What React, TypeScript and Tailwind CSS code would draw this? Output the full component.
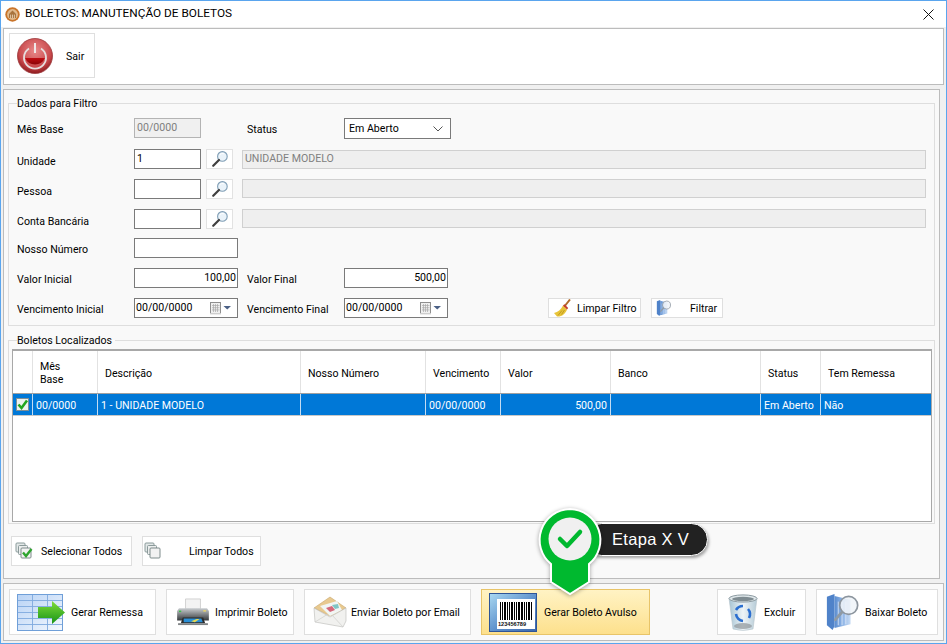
import React from "react";

const Power = () => (
  <svg width="36" height="36" viewBox="0 0 36 36">
    <defs>
      <radialGradient id="pw" cx="50%" cy="35%" r="65%">
        <stop offset="0" stopColor="#e88a8a" />
        <stop offset="0.7" stopColor="#c9494c" />
        <stop offset="1" stopColor="#8e1a1e" />
      </radialGradient>
      <linearGradient id="pw2" x1="0" y1="0" x2="0" y2="1">
        <stop offset="0" stopColor="#c00d12" />
        <stop offset="1" stopColor="#8a0508" />
      </linearGradient>
    </defs>
    <circle cx="18" cy="18" r="17.5" fill="url(#pw)" stroke="#9c3a3c" strokeWidth="0.8" />
    <path d="M8 20 H28 A11 11 0 0 1 8 20Z" fill="url(#pw2)" />
    <path d="M12 10.5 A11 11 0 1 0 24 10.5" fill="none" stroke="#e6dede" strokeWidth="1.8" />
    <rect x="17" y="5" width="2" height="10" fill="#f0e8e8" />
  </svg>
);

const TitleLogo = () => (
  <svg width="15" height="15" viewBox="0 0 15 15">
    <circle cx="7.5" cy="7.5" r="7.2" fill="#c9742a" />
    <circle cx="7.5" cy="7.5" r="5.4" fill="#e0b98c" />
    <path d="M4 11V7L7.5 3.6 11 7V11Z" fill="#a8733d" />
    <path d="M5.6 11V7.6M7.5 11V7.6M9.4 11V7.6" stroke="#eddcc4" strokeWidth="0.8" />
  </svg>
);

const Magnifier = () => (
  <svg width="18" height="18" viewBox="0 0 18 18">
    <circle cx="11.4" cy="6.4" r="4.8" fill="#eaf3fa" stroke="#7f9db5" strokeWidth="1.1" />
    <path d="M8 10 L2.2 15.8" stroke="#3f3f3f" strokeWidth="2.2" strokeLinecap="round" />
    <path d="M9 4.5 A3.5 3.5 0 0 1 13 3.8" stroke="#ffffff" strokeWidth="1" fill="none" />
  </svg>
);

const Calendar = () => (
  <svg width="28" height="14" viewBox="0 0 28 14" className="shrink-0">
    <rect x="1.5" y="1.5" width="10" height="11" fill="#f0f0f0" stroke="#8f8f8f" />
    <path d="M3 4.5H10.5M3 6.7H10.5M3 8.9H10.5M4.5 3V11M6.5 3V11M8.5 3V11" stroke="#a9a9a9" strokeWidth="0.7" />
    <rect x="1" y="12" width="11" height="1.4" fill="#cfcfcf" />
    <path d="M14.5 5H22L18.25 8.5Z" fill="#4c6186" />
  </svg>
);

const Broom = () => (
  <svg width="20" height="18" viewBox="0 0 20 18" className="shrink-0">
    <path d="M11 8 L17 0.5" stroke="#b06a2a" strokeWidth="2" />
    <path d="M1 14 L4 17.5 C8.5 18 12.5 15 14 10.5 L10 6.5 C8 10.5 5 13 1 14Z" fill="#e8c438" />
    <path d="M10 6.5 L14 10.5 L15.2 9 L11.4 5.2Z" fill="#c63c2c" />
    <path d="M5 16.5 L9 11.5M8.5 15.5 L11.5 11" stroke="#b5901e" strokeWidth="0.8" />
  </svg>
);

const BookGlass = ({ s }: { s: number }) => (
  <svg width={s} height={s} viewBox="0 0 36 38" className="shrink-0">
    <defs>
      <linearGradient id={`bk${s}`} x1="0" y1="0" x2="1" y2="0">
        <stop offset="0" stopColor="#5a8ccf" />
        <stop offset="0.5" stopColor="#8eb4e6" />
        <stop offset="1" stopColor="#c8dcf4" />
      </linearGradient>
    </defs>
    <path d="M1 3 L9 0 V34 L7 38 L1 33Z" fill="#4f82c9" />
    <path d="M9 2 L26 6 V32 L9 36Z" fill={`url(#bk${s})`} />
    <path d="M13 8V33M17 8V33M21 8V32" stroke="#e4eefa" strokeWidth="0.8" />
    <circle cx="24" cy="12" r="9.5" fill="#eef3f8" fillOpacity="0.85" stroke="#8c959e" strokeWidth="1.8" />
    <path d="M17 19 L10 27" stroke="#8f9aa4" strokeWidth="3" strokeLinecap="round" />
  </svg>
);

const Stack = ({ check }: { check?: boolean }) => (
  <svg width="18" height="18" viewBox="0 0 18 18" className="shrink-0">
    <rect x="1" y="1" width="9" height="9" rx="1" fill="#e3e8e8" stroke="#8a9a9a" />
    <rect x="3.5" y="3.5" width="9" height="9" rx="1" fill="#eceeee" stroke="#8a9a9a" />
    <rect x="6" y="6" width="10" height="10" rx="1" fill="#f2f2f2" stroke="#7e8c8c" />
    {check && <path d="M8 10.5 L11 14 L16.5 7" fill="none" stroke="#2fa52f" strokeWidth="2.4" />}
  </svg>
);

const SheetArrow = () => (
  <svg width="49" height="37" viewBox="0 0 49 37" className="shrink-0">
    <defs>
      <linearGradient id="sh" x1="0" y1="0" x2="1" y2="1">
        <stop offset="0" stopColor="#b9d3f5" />
        <stop offset="1" stopColor="#f4f8fe" />
      </linearGradient>
      <linearGradient id="ar" x1="0" y1="0" x2="0" y2="1">
        <stop offset="0" stopColor="#7fdc3a" />
        <stop offset="1" stopColor="#179317" />
      </linearGradient>
    </defs>
    <rect x="0.5" y="0.5" width="45" height="36" fill="url(#sh)" stroke="#6f9fd8" />
    <path d="M15.5 1V36M30.5 1V36M1 6.5H45M1 12.5H45M1 18.5H45M1 24.5H45M1 30.5H45" stroke="#7fa9de" strokeWidth="0.9" />
    <path d="M21 13H35V7L48 18.5 35 30V24H21Z" fill="url(#ar)" />
  </svg>
);

const Printer = () => (
  <svg width="34" height="28" viewBox="0 0 36 30" className="shrink-0">
    <defs>
      <linearGradient id="pr" x1="0" y1="0" x2="0" y2="1">
        <stop offset="0" stopColor="#c9cdd0" />
        <stop offset="1" stopColor="#36393c" />
      </linearGradient>
    </defs>
    <path d="M10 1H26V12H10Z" fill="#f3f3f3" stroke="#bdbdbd" strokeWidth="0.7" />
    <path d="M3 11H33L35 14V24H1V14Z" fill="url(#pr)" />
    <rect x="3" y="13.5" width="2.4" height="1.6" fill="#35c245" />
    <rect x="29" y="13" width="3" height="1.6" fill="#e8d36a" />
    <path d="M7 21H29L31 27H5Z" fill="#2b2b2b" />
    <path d="M8 22H27L28.5 26H8Z" fill="#2a8fd6" />
    <path d="M16 25L22 22.5H25L20 26Z" fill="#e8d94e" />
    <rect x="2" y="27" width="32" height="2" fill="#7f8385" />
  </svg>
);

const Envelope = () => (
  <svg width="35" height="32" viewBox="0 0 35 32" className="shrink-0">
    <path d="M1 12 L17 1 L33 12 L17 20Z" fill="#e8c98f" stroke="#c7a66b" strokeWidth="0.6" />
    <path d="M7 10 L24 5 L29 14 L17 20Z" fill="#f1f6f4" />
    <path d="M13 12 L19 10 L22 14 L17 16Z" fill="#d5687a" />
    <path d="M19 9 L25 8 L26 12 L22 13Z" fill="#7fc5c4" />
    <path d="M1 12 L17 21 L33 12 L33 25 L30 31 L2 26Z" fill="#f1f1ef" stroke="#b9b9b6" strokeWidth="0.6" />
    <path d="M2 26 L15 18M30 31 L19 19" stroke="#cfcfcc" strokeWidth="0.7" />
  </svg>
);

const bars: [number, number][] = [[0,1],[2,1],[4,2],[7,1],[9,1],[11,2],[14,1],[16,1],[18,2],[21,2],[24,1],[26,1],[28,2],[31,1]];

const Barcode = () => (
  <svg width="48" height="39" viewBox="0 0 48 39" className="shrink-0">
    <defs>
      <linearGradient id="bc" x1="0" y1="0" x2="1" y2="1">
        <stop offset="0" stopColor="#a9d9f2" />
        <stop offset="0.55" stopColor="#5c8fcb" />
        <stop offset="1" stopColor="#3a67ad" />
      </linearGradient>
    </defs>
    <rect x="0.5" y="0.5" width="47" height="38" fill="url(#bc)" stroke="#2f5597" />
    <rect x="8" y="6" width="38" height="30" fill="#ffffff" />
    <g transform="translate(11 9)">
      {bars.map(([x, w], i) => (
        <rect key={i} x={x} y="0" width={w} height="18" fill="#000" />
      ))}
    </g>
    <text x="9" y="33" fontSize="5.6" fontFamily="Liberation Sans, sans-serif" fontWeight="700" fill="#111">123456789</text>
  </svg>
);

const Bin = () => (
  <svg width="30" height="37" viewBox="0 0 30 37" className="shrink-0">
    <defs>
      <linearGradient id="bn" x1="0" y1="0" x2="1" y2="0">
        <stop offset="0" stopColor="#a6c4d4" />
        <stop offset="0.5" stopColor="#eef4f7" />
        <stop offset="1" stopColor="#b5cbd7" />
      </linearGradient>
    </defs>
    <path d="M1 4 L5 35 Q15 38 25 35 L29 4Z" fill="url(#bn)" stroke="#b5c3ca" strokeWidth="0.6" />
    <ellipse cx="15" cy="4.5" rx="14" ry="3.6" fill="#dfe7ea" stroke="#8e9ca3" />
    <ellipse cx="15" cy="5" rx="11" ry="2.2" fill="#7f8c92" />
    <path d="M8 16 A8 8 0 0 1 15 12" stroke="#2b6fd0" strokeWidth="2.6" fill="none" />
    <path d="M20 15 A8 8 0 0 1 21 24" stroke="#2b6fd0" strokeWidth="2.6" fill="none" />
    <path d="M8 20 A8 8 0 0 0 15 27" stroke="#2b6fd0" strokeWidth="2.6" fill="none" />
    <ellipse cx="15" cy="32" rx="9" ry="3" fill="#8e969a" fillOpacity="0.7" />
  </svg>
);

const CheckBox = () => (
  <svg width="13" height="13" viewBox="0 0 13 13">
    <rect x="0.5" y="0.5" width="12" height="12" fill="#eef2ee" stroke="#7f8f95" />
    <path d="M2.5 6.5 L5.5 10 L11 2.5" fill="none" stroke="#23a61e" strokeWidth="2.6" />
  </svg>
);

const Btn = ({ w, h, icon, text, children, yellow }: { w: string; h: string; icon: React.ReactNode; text: string; children: React.ReactNode; yellow?: boolean }) => (
  <div className={`${w} ${h} flex items-center shrink-0 border ${yellow ? "border-[#e8c468] bg-gradient-to-b from-[#fff3c4] to-[#fde08c]" : "border-[#dfdfdf] bg-white"}`}>
    {icon}
    <span className={`${text} whitespace-nowrap`}>{children}</span>
  </div>
);

const Field = ({ w, children, right, disabled, date }: { w: string; children?: React.ReactNode; right?: boolean; disabled?: boolean; date?: boolean }) => (
  <div className={`${w} h-5 shrink-0 border flex items-center leading-none ${disabled ? "border-[#b4b4b4] bg-[#f0f0f0] text-[#7f7f7f]" : "border-[#7a7a7a] bg-white text-black"} ${right ? "justify-end pr-[1px]" : date ? "pl-[1px]" : "pl-[2px]"}`}>
    {children}
  </div>
);

const Search = () => (
  <div className="w-[27px] h-5 ml-[5px] shrink-0 border border-[#e2e2e2] bg-white flex items-center justify-center">
    <Magnifier />
  </div>
);

const Long = ({ children }: { children?: React.ReactNode }) => (
  <div className={`w-[684px] h-[19px] ml-[9px] shrink-0 border border-[#d0d0d0] bg-[#efefef] text-[#808080] flex items-center pl-[2px] leading-none ${children ? "mt-[1px]" : ""}`}>
    {children}
  </div>
);

const Label = ({ w, children }: { w: string; children: React.ReactNode }) => (
  <div className={`${w} shrink-0 pt-[5px] leading-[14px] whitespace-nowrap`}>{children}</div>
);

const H = ({ children }: { children: React.ReactNode }) => <div className="pl-[7px] pt-[4px]">{children}</div>;
const C = ({ children }: { children: React.ReactNode }) => <div className="pl-[3px] pt-[2px]">{children}</div>;

const columns = [
  { w: "w-[20px]", h: "", c: <div className="pl-[3px]"><CheckBox /></div> },
  { w: "w-[65px]", h: <div className="pl-[7px] pt-[2px] leading-[13px]">Mês<br />Base</div>, c: <C>00/0000</C> },
  { w: "w-[203px]", h: <H>Descrição</H>, c: <C>1 - UNIDADE MODELO</C> },
  { w: "w-[125px]", h: <H>Nosso Número</H>, c: null },
  { w: "w-[75px]", h: <H>Vencimento</H>, c: <C>00/00/0000</C> },
  { w: "w-[110px]", h: <H>Valor</H>, c: <div className="pr-[3px] pt-[2px] w-full text-right">500,00</div> },
  { w: "w-[150px]", h: <H>Banco</H>, c: null },
  { w: "w-[60px]", h: <H>Status</H>, c: <C>Em Aberto</C> },
  { w: "flex-1", h: <H>Tem Remessa</H>, c: <C>Não</C> },
];

export default function App() {
  return (
    <div className="relative w-[947px] h-[644px] overflow-hidden border border-[#5aa5ee] bg-[#f0f0f0] text-[10.6px] text-black [font-family:Roboto,sans-serif]">
      <div className="h-[26px] bg-white flex items-center pl-[4px]">
        <TitleLogo />
        <span className="ml-[5px] text-[11.8px]">BOLETOS: MANUTENÇÃO DE BOLETOS</span>
        <svg className="ml-auto mr-[12px]" width="11" height="11" viewBox="0 0 11 11">
          <path d="M0.5 0.5L10.5 10.5M10.5 0.5L0.5 10.5" stroke="#111" strokeWidth="1" />
        </svg>
      </div>

      <div className="ml-[2px] mt-[1px] w-[941px] h-[57px] border border-[#bcbcbc] bg-white pl-[5px] pt-[4px]">
        <Btn w="w-[86px]" h="h-[45px]" text="ml-[13px] pt-[3px]" icon={<div className="ml-[7px]"><Power /></div>}>Sair</Btn>
      </div>

      <div className="ml-[2px] mt-[4px] w-[937px] h-[490px] border border-[#bcbcbc] bg-[#f9f9f9] pl-[4px] pt-[6px]">
        <fieldset className="w-[927px] h-[230px] border border-[#dedede] pl-[8px]">
          <legend className="pr-[3px] h-[14px] leading-[16px]">Dados para Filtro</legend>
          <div className="flex mt-[8px] h-5">
            <Label w="w-[117px]">Mês Base</Label>
            <Field w="w-[67px]" disabled>00/0000</Field>
            <Label w="w-[97px] ml-[46px]">Status</Label>
            <div className="w-[107px] h-[21px] shrink-0 border border-[#7a7a7a] bg-white flex items-center justify-between pl-[4px] pr-[7px]">
              <span className="pt-[1px]">Em Aberto</span>
              <svg width="10" height="6" viewBox="0 0 10 6"><path d="M0.5 0.5L5 5L9.5 0.5" fill="none" stroke="#555" /></svg>
            </div>
          </div>
          <div className="flex mt-[11px] h-5">
            <Label w="w-[117px]"><div className="pt-[1px]">Unidade</div></Label>
            <Field w="w-[67px]">1</Field>
            <Search />
            <Long>UNIDADE MODELO</Long>
          </div>
          <div className="flex mt-[10px] h-5">
            <Label w="w-[117px]"><div className="pt-[1px]">Pessoa</div></Label>
            <Field w="w-[67px]" />
            <Search />
            <Long />
          </div>
          <div className="flex mt-[10px] h-5">
            <Label w="w-[117px]"><div className="pt-[1px]">Conta Bancária</div></Label>
            <Field w="w-[67px]" />
            <Search />
            <Long />
          </div>
          <div className="flex mt-[9px] h-5">
            <Label w="w-[117px]">Nosso Número</Label>
            <Field w="w-[104px]" />
          </div>
          <div className="flex mt-[10px] h-5">
            <Label w="w-[117px]">Valor Inicial</Label>
            <Field w="w-[104px]" right>100,00</Field>
            <Label w="w-[97px] ml-[9px]">Valor Final</Label>
            <Field w="w-[104px]" right>500,00</Field>
          </div>
          <div className="flex mt-[10px] h-5">
            <Label w="w-[117px]">Vencimento Inicial</Label>
            <Field w="w-[104px]" date><span className="flex-1">00/00/0000</span><Calendar /></Field>
            <Label w="w-[97px] ml-[9px]">Vencimento Final</Label>
            <Field w="w-[104px]" date><span className="flex-1">00/00/0000</span><Calendar /></Field>
            <div className="ml-[100px] flex gap-[10px]">
              <Btn w="w-[93px]" h="h-5" text="ml-[4px] pt-[2px]" icon={<div className="ml-[4px]"><Broom /></div>}>Limpar Filtro</Btn>
              <Btn w="w-[72px]" h="h-5" text="ml-[18px] pt-[2px]" icon={<div className="ml-[4px]"><BookGlass s={16} /></div>}>Filtrar</Btn>
            </div>
          </div>
        </fieldset>

        <fieldset className="mt-[7px] w-[927px] h-[191px] border border-[#dedede] pl-[3px]">
          <legend className="ml-[5px] pr-[3px] h-[14px] leading-[16px]">Boletos Localizados</legend>
          <div className="w-[920px] h-[173px] mt-[2px] border border-[#a8a8a8] border-t-2 bg-white">
            <div className="flex h-[43px] border-b border-[#a0a0a0]">
              {columns.map((c, i) => (
                <div key={i} className={`${c.w} flex items-center border-r border-[#e2e2e2] last:border-r-0 shrink-0 last:shrink`}>{c.h}</div>
              ))}
            </div>
            <div className="flex h-[22px] bg-[#0078d7] text-white border-b border-[#c8c8c8]">
              {columns.map((c, i) => (
                <div key={i} className={`${c.w} flex items-center border-r border-[#c4dcf2] last:border-r-0 shrink-0 last:shrink`}>{c.c}</div>
              ))}
            </div>
          </div>
        </fieldset>

        <div className="flex gap-[10px] mt-[12px] ml-[3px]">
          <Btn w="w-[121px]" h="h-[30px]" text="ml-[8px] pt-[2px]" icon={<div className="ml-[3px]"><Stack check /></div>}>Selecionar Todos</Btn>
          <Btn w="w-[119px]" h="h-[30px]" text="ml-[27px] pt-[2px]" icon={<div className="ml-[1px]"><Stack /></div>}>Limpar Todos</Btn>
        </div>
      </div>

      <div className="absolute left-[2px] top-[582px] w-[941px] h-[58px] border border-[#bcbcbc] bg-[#f9f9f9] pl-[5px] pt-[5px] flex gap-[10px]">
        <Btn w="w-[147px]" h="h-[46px]" text="ml-[5px] pt-[2px]" icon={<div className="ml-[7px]"><SheetArrow /></div>}>Gerar Remessa</Btn>
        <Btn w="w-[128px]" h="h-[46px]" text="ml-[5px] pt-[2px]" icon={<div className="ml-[9px]"><Printer /></div>}>Imprimir Boleto</Btn>
        <Btn w="w-[167px]" h="h-[46px]" text="ml-[3px] pt-[2px]" icon={<div className="ml-[8px]"><Envelope /></div>}>Enviar Boleto por Email</Btn>
        <Btn w="w-[169px]" h="h-[46px]" yellow text="ml-[7px] pt-[2px]" icon={<div className="ml-[7px]"><Barcode /></div>}>Gerar Boleto Avulso</Btn>
        <div className="ml-[57px] flex gap-[10px]">
          <Btn w="w-[89px]" h="h-[46px]" text="ml-[6px] pt-[2px]" icon={<div className="ml-[10px]"><Bin /></div>}>Excluir</Btn>
          <Btn w="w-[122px]" h="h-[46px]" text="ml-[4px] pt-[2px]" icon={<div className="ml-[8px]"><BookGlass s={36} /></div>}>Baixar Boleto</Btn>
        </div>
      </div>

      {/* Badge overlay */}
      <div className="absolute left-[584px] top-[522px] w-[123px] h-[33px] rounded-full bg-[#222222] border border-white shadow-[1px_2px_3px_rgba(0,0,0,0.35)] flex items-center pl-[26px] text-white text-[16.5px] tracking-[0.3px] [font-family:'Liberation_Sans',sans-serif] whitespace-nowrap">
        Etapa X V
      </div>
      <svg className="absolute left-[534px] top-[503px]" width="70" height="95" viewBox="0 0 70 95" style={{ filter: "drop-shadow(0 1px 2px rgba(0,0,0,.35))" }}>
        <path d="M35 5 A31 31 0 0 1 54 60 V78 L35 90 L16 78 V60 A31 31 0 0 1 35 5Z" fill="#00b92f" stroke="#ffffff" strokeWidth="2" />
        <circle cx="35" cy="35" r="21.5" fill="#f0f0f0" />
        <path d="M25 35 L32 42 L45 28" fill="none" stroke="#00b92f" strokeWidth="4.5" strokeLinecap="round" strokeLinejoin="round" />
      </svg>
    </div>
  );
}
